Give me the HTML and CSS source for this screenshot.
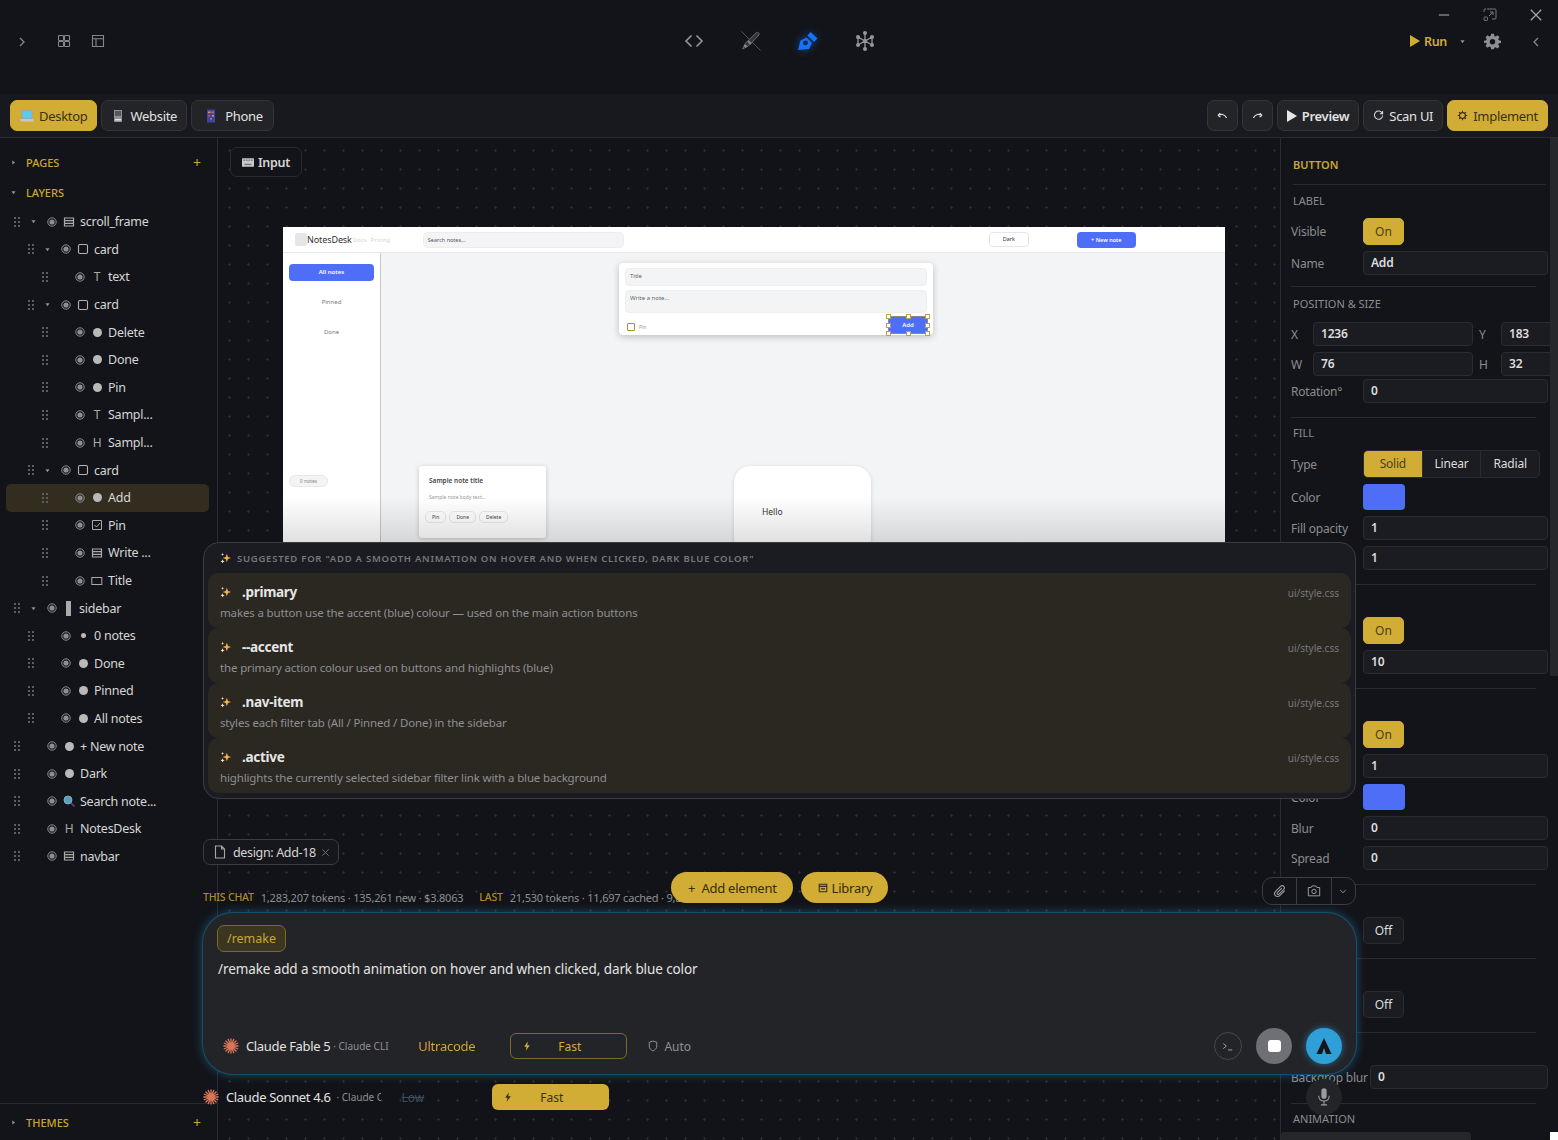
FILE: index.html
```html
<!DOCTYPE html>
<html lang="en">
<head>
  <meta charset="UTF-8">
  <meta name="viewport" content="width=device-width, initial-scale=1.0">
  <title>Design Editor</title>
  <link rel="stylesheet" href="styles.css">
</head>
<body>
  <!-- shared icons -->
  <svg class="sprite" aria-hidden="true">
    <symbol id="grip" viewBox="0 0 6 10"><g fill="#5d5e63"><rect x="0" y="0" width="2" height="2"/><rect x="4" y="0" width="2" height="2"/><rect x="0" y="4" width="2" height="2"/><rect x="4" y="4" width="2" height="2"/><rect x="0" y="8" width="2" height="2"/><rect x="4" y="8" width="2" height="2"/></g></symbol>
    <symbol id="eye" viewBox="0 0 10 10"><circle cx="5" cy="5" r="4.2" fill="none" stroke="#8e8e92" stroke-width="1"/><circle cx="5" cy="5" r="2.6" fill="#8e8e92"/></symbol>
    <symbol id="caret" viewBox="0 0 6 6"><path d="M.5 1.5h5L3 5z" fill="#8e8e92"/></symbol>
    <symbol id="lines" viewBox="0 0 12 12"><path d="M1.5 2h9v8h-9zM1.5 4.7h9M1.5 7.3h9" fill="none" stroke="#aaa" stroke-width="1.2"/></symbol>
    <symbol id="card" viewBox="0 0 12 12"><rect x="1.5" y="1.5" width="9" height="9" rx="1.5" fill="none" stroke="#b5b5b5" stroke-width="1.1"/></symbol>
    <symbol id="sparkle" viewBox="0 0 14 14"><path d="M8 2l1.3 3.7L13 7 9.3 8.300 8 12 6.700 8.300 3 7l3.700-1.300z" fill="#f5b14a"/><path d="M3 8.500l.7 1.800 1.800.7-1.800.7-.7 1.800-.7-1.800L.5 11l1.800-.7z" fill="#fbe7c4"/><path d="M3 1l.5 1.300L4.800 2.800l-1.300.5L3 4.600l-.5-1.300-1.300-.5 1.300-.5z" fill="#fbe7c4"/></symbol>
    <symbol id="burst" viewBox="0 0 18 18"><path d="M9 1v16M1 9h16M3.300 3.300l11.400 11.400M14.700 3.300L3.300 14.700M5.900 1.500l6.200 15M12.100 1.500l-6.200 15M1.500 5.900l15 6.200M16.500 5.900l-15 6.200" stroke="#d9765a" stroke-width="1.500" stroke-linecap="round" fill="none"/></symbol>
    <symbol id="bolt" viewBox="0 0 10 12"><path d="M6.200 0L1.500 6.800h3L3.500 12l5-7H5.300z" fill="currentColor"/></symbol>
  </svg>

  <div class="app">
    <header class="titlebar">
      <div class="title-left">
        <svg class="ico chev" viewBox="0 0 8 12"><path d="M2 2l4 4-4 4" fill="none" stroke="#85868a" stroke-width="1.300"/></svg>
        <svg class="ico" viewBox="0 0 14 14"><g fill="none" stroke="#85868a" stroke-width="1.100"><rect x="1.500" y="1.500" width="5" height="5" rx=".8"/><rect x="7.500" y="1.500" width="5" height="5" rx=".8"/><rect x="1.500" y="7.500" width="5" height="5" rx=".8"/><rect x="7.500" y="7.500" width="5" height="5" rx=".8"/></g></svg>
        <svg class="ico" viewBox="0 0 14 14"><path d="M1.500 1.500h11v11h-11zM1.500 4.800h11M5 4.800v7.700" fill="none" stroke="#85868a" stroke-width="1.100"/></svg>
      </div>
      <div class="title-center">
        <svg class="mode" viewBox="0 0 22 22"><path d="M8.500 5.500L3 11l5.500 5.500M13.500 5.500L19 11l-5.500 5.500" transform="translate(0 0)" fill="none" stroke="#96979b" stroke-width="1.600"/></svg>
        <svg class="mode" viewBox="0 0 22 22"><path d="M1.500 1.500l19 19" stroke="#55565a" stroke-width="1"/><path d="M2.500 19l3-6L16.500 2.500c1.500-.8 3.200.6 2.500 2.500L8.500 16z" fill="#35363a" stroke="#66676b" stroke-width="1"/><circle cx="5.500" cy="16" r="1.300" fill="#96979b"/><path d="M8 11l3 3" stroke="#85868a" stroke-width="2"/></svg>
        <svg class="mode nib" viewBox="0 0 22 22"><path d="M1 20l2.500-9.500 6-3 5.500 5.500-3 6z" fill="#1673f5"/><path d="M10.500 4.500l3-3.500 7 6.500-3.500 3.500z" fill="#1673f5" transform="translate(0 1)"/><circle cx="8.500" cy="13" r="2.400" fill="#0f2a5c"/></svg>
        <svg class="mode" viewBox="0 0 22 22"><g stroke="#96979b" stroke-width="1.300" fill="none"><path d="M11 3v16M4 7l7 4 7-4M4 15l7-4 7 4M4 7v8M18 7v8"/></g><g fill="#96979b"><circle cx="11" cy="3" r="2"/><circle cx="11" cy="19" r="2"/><circle cx="4" cy="7" r="2"/><circle cx="18" cy="7" r="2"/><circle cx="4" cy="15" r="2"/><circle cx="18" cy="15" r="2"/><circle cx="11" cy="11" r="2"/></g></svg>
      </div>
      <div class="title-right">
        <div class="win-controls">
          <svg class="win" viewBox="0 0 12 12"><path d="M1.500 6h9" stroke="#85868a" stroke-width="1.200"/></svg>
          <svg class="win" viewBox="0 0 14 14"><path d="M4 1h8a1 1 0 0 1 1 1v8a1 1 0 0 1-1 1h-3M1 4V2a1 1 0 0 1 1-1h1M6 8l4-4M7 4h3v3" fill="none" stroke="#77787c" stroke-width="1"/><rect x="1" y="9" width="3.500" height="3.500" rx=".7" fill="none" stroke="#77787c"/></svg>
          <svg class="win" viewBox="0 0 12 12"><path d="M1.500 1.500l9 9M10.500 1.500l-9 9" stroke="#a4a5a8" stroke-width="1.100"/></svg>
        </div>
        <div class="run-row">
          <span class="run"><svg class="run-play" viewBox="0 0 10 12"><path d="M0 0l10 6-10 6z" fill="#d1ad36"/></svg>Run</span>
          <svg class="run-caret"><use href="#caret"/></svg>
          <svg class="gear" viewBox="0 0 24 24"><path fill="#8e8f94" fill-rule="evenodd" d="M10 1h4l.6 3.100 1.900.8 2.600-1.800 2.800 2.800-1.800 2.600.8 1.900L24 11v3l-3.100.6-.8 1.900 1.800 2.600-2.800 2.800-2.600-1.800-1.900.8L14 23h-4l-.6-3.100-1.900-.8-2.600 1.800-2.800-2.800 1.800-2.600-.8-1.900L0 14v-3l3.100-.6.800-1.900L2.100 5.900 4.900 3.100l2.600 1.800 1.900-.8zM12 8.500a3.800 3.800 0 1 0 0 7.600 3.800 3.800 0 0 0 0-7.600z"/></svg>
          <svg class="ico chev" viewBox="0 0 8 12"><path d="M6 2L2 6l4 4" fill="none" stroke="#85868a" stroke-width="1.300"/></svg>
        </div>
      </div>
    </header>

    <nav class="toolbar">
      <div class="tool-group">
        <button class="tool-btn gold"><svg class="emoji" viewBox="0 0 14 14"><rect x="2" y="1.500" width="10" height="8" fill="#5fc8ef" stroke="#9aa3ad" stroke-width=".8"/><path d="M.5 10h13v2.500H.5z" fill="#c4c8cc"/></svg>Desktop</button>
        <button class="tool-btn"><svg class="emoji" viewBox="0 0 14 14"><rect x="3" y="1" width="8" height="12" fill="#8d9096"/><rect x="4" y="2" width="6" height="5" fill="#55585e"/><rect x="4" y="10" width="6" height="1.500" fill="#e2e4e6"/></svg>Website</button>
        <button class="tool-btn phone"><svg class="emoji" viewBox="0 0 14 14"><rect x="3" y=".5" width="8" height="13" fill="#4c3f9a"/><g fill="#e8b23c"><rect x="4.200" y="2.500" width="1.600" height="1.600"/><rect x="8.200" y="6" width="1.600" height="1.600"/></g><g fill="#e0524d"><rect x="6.200" y="2.500" width="1.600" height="1.600"/><rect x="4.200" y="6" width="1.600" height="1.600"/></g><g fill="#4aa3df"><rect x="8.200" y="2.500" width="1.600" height="1.600"/><rect x="6.200" y="9" width="1.600" height="1.600"/></g></svg>Phone</button>
      </div>
      <div class="tool-group">
        <button class="tool-btn square"><svg class="hist" viewBox="0 0 12 8"><path d="M1 3.500l2.500-2.500M1 3.500L3.800 5M1.500 3.500c3-2 6.500-1.800 9 2.500" fill="none" stroke="#ddd" stroke-width="1.300"/></svg></button>
        <button class="tool-btn square"><svg class="hist" viewBox="0 0 12 8"><path d="M11 3.500L8.500 1M11 3.500L8.200 5M10.500 3.500c-3-2-6.500-1.800-9 2.500" fill="none" stroke="#ddd" stroke-width="1.300"/></svg></button>
        <button class="tool-btn strong"><svg class="play" viewBox="0 0 10 12"><path d="M0 0l10 6-10 6z" fill="#e6e6e6"/></svg>Preview</button>
        <button class="tool-btn"><svg class="scan" viewBox="0 0 12 12"><path d="M10 3.500A4.500 4.500 0 1 0 10.500 6M10.500 1v3h-3" fill="none" stroke="#ddd" stroke-width="1.100"/></svg>Scan UI</button>
        <button class="tool-btn gold"><svg class="scan" viewBox="0 0 12 12"><circle cx="6" cy="6" r="3.200" fill="none" stroke="#3a3113" stroke-width="1.300"/><path d="M6 .8v2M6 9.200v2M.8 6h2M9.200 6h2M2.300 2.300l1.400 1.400M8.300 8.300l1.400 1.400M9.700 2.300L8.300 3.700M3.700 8.300L2.300 9.700" stroke="#3a3113" stroke-width="1.100"/></svg>Implement</button>
      </div>
    </nav>

    <div class="workspace">
      <aside class="left-panel">
        <div class="panel-head first">
          <span class="head-label"><svg class="mini-caret side"><use href="#caret"/></svg>PAGES</span>
          <span class="plus">+</span>
        </div>
        <div class="panel-head">
          <span class="head-label"><svg class="mini-caret"><use href="#caret"/></svg>LAYERS</span>
        </div>
        <ul class="layers">
          <li class="layer"><svg class="grip"><use href="#grip"/></svg><svg class="caret"><use href="#caret"/></svg><svg class="eye"><use href="#eye"/></svg><svg class="type"><use href="#lines"/></svg><span>scroll_frame</span></li>
          <li class="layer lvl1"><svg class="grip"><use href="#grip"/></svg><svg class="caret"><use href="#caret"/></svg><svg class="eye"><use href="#eye"/></svg><svg class="type"><use href="#card"/></svg><span>card</span></li>
          <li class="layer lvl2"><svg class="grip"><use href="#grip"/></svg><i class="caret"></i><svg class="eye"><use href="#eye"/></svg><b class="type glyph">T</b><span>text</span></li>
          <li class="layer lvl1"><svg class="grip"><use href="#grip"/></svg><svg class="caret"><use href="#caret"/></svg><svg class="eye"><use href="#eye"/></svg><svg class="type"><use href="#card"/></svg><span>card</span></li>
          <li class="layer lvl2"><svg class="grip"><use href="#grip"/></svg><i class="caret"></i><svg class="eye"><use href="#eye"/></svg><i class="type dot"></i><span>Delete</span></li>
          <li class="layer lvl2"><svg class="grip"><use href="#grip"/></svg><i class="caret"></i><svg class="eye"><use href="#eye"/></svg><i class="type dot"></i><span>Done</span></li>
          <li class="layer lvl2"><svg class="grip"><use href="#grip"/></svg><i class="caret"></i><svg class="eye"><use href="#eye"/></svg><i class="type dot"></i><span>Pin</span></li>
          <li class="layer lvl2"><svg class="grip"><use href="#grip"/></svg><i class="caret"></i><svg class="eye"><use href="#eye"/></svg><b class="type glyph">T</b><span>Sampl...</span></li>
          <li class="layer lvl2"><svg class="grip"><use href="#grip"/></svg><i class="caret"></i><svg class="eye"><use href="#eye"/></svg><b class="type glyph">H</b><span>Sampl...</span></li>
          <li class="layer lvl1"><svg class="grip"><use href="#grip"/></svg><svg class="caret"><use href="#caret"/></svg><svg class="eye"><use href="#eye"/></svg><svg class="type"><use href="#card"/></svg><span>card</span></li>
          <li class="layer lvl2 selected"><svg class="grip"><use href="#grip"/></svg><i class="caret"></i><svg class="eye"><use href="#eye"/></svg><i class="type dot"></i><span>Add</span></li>
          <li class="layer lvl2"><svg class="grip"><use href="#grip"/></svg><i class="caret"></i><svg class="eye"><use href="#eye"/></svg><svg class="type" viewBox="0 0 12 12"><path d="M1.500 1.500h9v9h-9z" fill="none" stroke="#aaa"/><path d="M3.500 6l2 2 3.500-4" fill="none" stroke="#aaa"/></svg><span>Pin</span></li>
          <li class="layer lvl2"><svg class="grip"><use href="#grip"/></svg><i class="caret"></i><svg class="eye"><use href="#eye"/></svg><svg class="type"><use href="#lines"/></svg><span>Write ...</span></li>
          <li class="layer lvl2"><svg class="grip"><use href="#grip"/></svg><i class="caret"></i><svg class="eye"><use href="#eye"/></svg><svg class="type" viewBox="0 0 12 12"><rect x=".8" y="2.500" width="10" height="7" fill="none" stroke="#aaa"/></svg><span>Title</span></li>
          <li class="layer"><svg class="grip"><use href="#grip"/></svg><svg class="caret"><use href="#caret"/></svg><svg class="eye"><use href="#eye"/></svg><i class="type bar"></i><span>sidebar</span></li>
          <li class="layer lvl1"><svg class="grip"><use href="#grip"/></svg><i class="caret"></i><svg class="eye"><use href="#eye"/></svg><i class="type dot small"></i><span>0 notes</span></li>
          <li class="layer lvl1"><svg class="grip"><use href="#grip"/></svg><i class="caret"></i><svg class="eye"><use href="#eye"/></svg><i class="type dot"></i><span>Done</span></li>
          <li class="layer lvl1"><svg class="grip"><use href="#grip"/></svg><i class="caret"></i><svg class="eye"><use href="#eye"/></svg><i class="type dot"></i><span>Pinned</span></li>
          <li class="layer lvl1"><svg class="grip"><use href="#grip"/></svg><i class="caret"></i><svg class="eye"><use href="#eye"/></svg><i class="type dot"></i><span>All notes</span></li>
          <li class="layer"><svg class="grip"><use href="#grip"/></svg><i class="caret"></i><svg class="eye"><use href="#eye"/></svg><i class="type dot"></i><span>+ New note</span></li>
          <li class="layer"><svg class="grip"><use href="#grip"/></svg><i class="caret"></i><svg class="eye"><use href="#eye"/></svg><i class="type dot"></i><span>Dark</span></li>
          <li class="layer"><svg class="grip"><use href="#grip"/></svg><i class="caret"></i><svg class="eye"><use href="#eye"/></svg><svg class="type" viewBox="0 0 12 12"><circle cx="5" cy="5" r="4" fill="#4fa3c4" stroke="#9fb4bf" stroke-width=".8"/><path d="M8 8l3.500 3.500" stroke="#6d3a7a" stroke-width="1.600"/></svg><span>Search note...</span></li>
          <li class="layer"><svg class="grip"><use href="#grip"/></svg><i class="caret"></i><svg class="eye"><use href="#eye"/></svg><b class="type glyph">H</b><span>NotesDesk</span></li>
          <li class="layer"><svg class="grip"><use href="#grip"/></svg><i class="caret"></i><svg class="eye"><use href="#eye"/></svg><svg class="type"><use href="#lines"/></svg><span>navbar</span></li>
        </ul>
        <div class="panel-head themes">
          <span class="head-label"><svg class="mini-caret side"><use href="#caret"/></svg>THEMES</span>
          <span class="plus">+</span>
        </div>
      </aside>

      <main class="canvas">
        <div class="input-chip"><svg class="kbd" viewBox="0 0 14 10"><rect width="14" height="10" rx="1" fill="#c8c9cb"/><g fill="#6d6e72"><rect x="1.500" y="1.500" width="2" height="1.500"/><rect x="4.500" y="1.500" width="2" height="1.500"/><rect x="7.500" y="1.500" width="2" height="1.500"/><rect x="10.500" y="1.500" width="2" height="1.500"/><rect x="3" y="6.500" width="8" height="1.500"/></g></svg>Input</div>

        <section class="preview">
          <div class="pv-nav">
            <i class="pv-logo"></i><span class="pv-brand">NotesDesk</span><span class="pv-link">Docs</span><span class="pv-link">Pricing</span>
            <div class="pv-search">Search notes...</div>
            <div class="pv-dark">Dark</div>
            <div class="pv-new">+ New note</div>
          </div>
          <div class="pv-body">
            <div class="pv-side">
              <div class="pv-tab active">All notes</div>
              <div class="pv-tab">Pinned</div>
              <div class="pv-tab">Done</div>
              <div class="pv-count">0 notes</div>
            </div>
            <div class="pv-content">
              <div class="pv-form">
                <div class="pv-input">Title</div>
                <div class="pv-input tall">Write a note...</div>
                <div class="pv-form-foot">
                  <span class="pv-pin"><i></i>Pin</span>
                  <div class="pv-add">Add
                    <i class="handle h1"></i><i class="handle h2"></i><i class="handle h3"></i><i class="handle h4"></i><i class="handle h5"></i><i class="handle h6"></i><i class="handle h7"></i><i class="handle h8"></i>
                  </div>
                </div>
              </div>
              <div class="pv-note">
                <div class="pv-note-title">Sample note title</div>
                <div class="pv-note-body">Sample note body text...</div>
                <div class="pv-note-btns"><span>Pin</span><span>Done</span><span>Delete</span></div>
              </div>
              <div class="pv-hello">Hello</div>
            </div>
          </div>
          <div class="pv-fade"></div>
        </section>
      </main>

      <aside class="props">
        <div class="prop-top">BUTTON</div>
        <section class="prop-sec label-sec">
          <h4>LABEL</h4>
          <div class="prop-row"><label>Visible</label><button class="toggle on">On</button></div>
          <div class="prop-row"><label>Name</label><div class="field">Add</div></div>
        </section>
        <section class="prop-sec pos-sec">
          <h4>POSITION &amp; SIZE</h4>
          <div class="prop-row pair"><label>X</label><div class="field">1236</div><label>Y</label><div class="field">183</div></div>
          <div class="prop-row pair"><label>W</label><div class="field">76</div><label>H</label><div class="field">32</div></div>
          <div class="prop-row tight"><label>Rotation°</label><div class="field">0</div></div>
        </section>
        <section class="prop-sec">
          <h4>FILL</h4>
          <div class="prop-row"><label>Type</label>
            <div class="segments"><span class="seg on">Solid</span><span class="seg">Linear</span><span class="seg">Radial</span></div>
          </div>
          <div class="prop-row"><label>Color</label><i class="swatch"></i></div>
          <div class="prop-row"><label>Fill opacity</label><div class="field">1</div></div>
          <div class="prop-row"><label>Opacity</label><div class="field">1</div></div>
        </section>
        <section class="prop-sec">
          <h4>CORNERS</h4>
          <div class="prop-row"><label>Rounded</label><button class="toggle on">On</button></div>
          <div class="prop-row"><label>Radius</label><div class="field">10</div></div>
        </section>
        <section class="prop-sec">
          <h4>BORDER</h4>
          <div class="prop-row"><label>Enabled</label><button class="toggle on">On</button></div>
          <div class="prop-row"><label>Width</label><div class="field">1</div></div>
          <div class="prop-row"><label>Color</label><i class="swatch"></i></div>
          <div class="prop-row"><label>Blur</label><div class="field">0</div></div>
          <div class="prop-row"><label>Spread</label><div class="field">0</div></div>
        </section>
        <section class="prop-sec">
          <h4>SHADOW</h4>
          <div class="prop-row"><label>Enabled</label><button class="toggle">Off</button></div>
        </section>
        <section class="prop-sec">
          <h4>GLOW</h4>
          <div class="prop-row"><label>Enabled</label><button class="toggle">Off</button></div>
        </section>
        <section class="prop-sec">
          <h4>EFFECTS</h4>
          <div class="prop-row wide"><label>Backdrop blur</label><div class="field">0</div></div>
        </section>
        <section class="prop-sec">
          <h4>ANIMATION</h4>
        </section>
        <i class="v-thumb"></i>
        <i class="h-thumb"></i>
        <i class="corner"></i>
      </aside>

      <!-- chat dock floats over the panels -->
      <div class="dock">
        <div class="suggest">
          <div class="suggest-head"><svg class="spark"><use href="#sparkle"/></svg>SUGGESTED FOR "ADD A SMOOTH ANIMATION ON HOVER AND WHEN CLICKED, DARK BLUE COLOR"</div>
          <div class="suggest-item">
            <div class="s-main"><div class="s-name"><svg class="spark"><use href="#sparkle"/></svg>.primary</div><div class="s-desc">makes a button use the accent (blue) colour — used on the main action buttons</div></div>
            <span class="s-file">ui/style.css</span>
          </div>
          <div class="suggest-item">
            <div class="s-main"><div class="s-name"><svg class="spark"><use href="#sparkle"/></svg>--accent</div><div class="s-desc">the primary action colour used on buttons and highlights (blue)</div></div>
            <span class="s-file">ui/style.css</span>
          </div>
          <div class="suggest-item">
            <div class="s-main"><div class="s-name"><svg class="spark"><use href="#sparkle"/></svg>.nav-item</div><div class="s-desc">styles each filter tab (All / Pinned / Done) in the sidebar</div></div>
            <span class="s-file">ui/style.css</span>
          </div>
          <div class="suggest-item">
            <div class="s-main"><div class="s-name"><svg class="spark"><use href="#sparkle"/></svg>.active</div><div class="s-desc">highlights the currently selected sidebar filter link with a blue background</div></div>
            <span class="s-file">ui/style.css</span>
          </div>
        </div>

        <div class="file-chip"><svg class="doc" viewBox="0 0 12 14"><path d="M1.500 1h6l3 3v9h-9zM7.500 1v3h3" fill="none" stroke="#a5a6aa" stroke-width="1.100"/></svg>design: Add-18<svg class="close" viewBox="0 0 10 10"><path d="M1.500 1.500l7 7M8.500 1.500l-7 7" stroke="#77787c"/></svg></div>

        <div class="stats">
          <b>THIS CHAT</b><span>1,283,207 tokens · 135,261 new · $3.8063</span><b class="last">LAST</b><span>21,530 tokens · 11,697 cached · 9,833 new · $0.0514</span>
        </div>

        <div class="composer">
          <span class="cmd-tag">/remake</span>
          <p class="prompt">/remake add a smooth animation on hover and when clicked, dark blue color</p>
          <div class="composer-foot">
            <svg class="burst"><use href="#burst"/></svg>
            <span class="model">Claude Fable 5</span><span class="model-sub">· Claude CLI</span>
            <span class="ultra">Ultracode</span>
            <div class="fast outline"><svg class="bolt"><use href="#bolt"/></svg><span>Fast</span></div>
            <svg class="shield" viewBox="0 0 12 14"><path d="M6 1l4.500 1.500V7c0 3-2 4.800-4.500 6C3.500 11.800 1.500 10 1.500 7V2.500z" fill="none" stroke="#8e8f94" stroke-width="1.200"/></svg>
            <span class="auto">Auto</span>
            <div class="foot-actions">
              <span class="term"><svg viewBox="0 0 14 10"><path d="M1.500 1.500L5 4.500 1.500 7.500M7 9h5" fill="none" stroke="#a5a6aa" stroke-width="1.100"/></svg></span>
              <span class="stop"><i></i></span>
              <span class="send"><svg viewBox="0 0 18 18"><path d="M9 1l7.500 16H11L9 11l-2 6H1.500z" fill="#14161a"/></svg></span>
            </div>
          </div>
        </div>

        <div class="model-row">
          <svg class="burst"><use href="#burst"/></svg>
          <span class="model">Claude Sonnet 4.6</span><span class="model-sub clip">· Claude CLI</span>
          <span class="low">Low</span>
          <div class="fast solid"><svg class="bolt"><use href="#bolt"/></svg><span>Fast</span></div>
          <span class="mic"><svg viewBox="0 0 16 22"><rect x="5" y="1" width="6" height="12" rx="3" fill="#9b9ca0"/><path d="M2 9.500c0 4 2.500 6 6 6s6-2 6-6M8 15.500V20M4.500 20h7" fill="none" stroke="#9b9ca0" stroke-width="1.200"/></svg></span>
        </div>

        <div class="float-actions">
          <button class="pill">+&nbsp; Add element</button>
          <button class="pill"><svg class="lib" viewBox="0 0 12 12"><path d="M1.500 1.500h9v9h-9zM1.500 4h9M3.500 7h5" fill="none" stroke="#332b10" stroke-width="1.300"/></svg>Library</button>
        </div>

        <div class="attach">
          <span><svg viewBox="0 0 16 16"><path d="M13.500 7.500L8 13c-1.700 1.700-4 1.700-5.300.3S1.500 9.800 3 8.300l5.700-5.700c1-1 2.700-1 3.600 0s1 2.500 0 3.500L6.800 11.600c-.5.500-1.300.5-1.800 0s-.5-1.300 0-1.800l5-5" fill="none" stroke="#9b9ca0" stroke-width="1.200"/></svg></span>
          <span><svg viewBox="0 0 16 14"><path d="M1.500 3h3.300l1-1.800h4.400l1 1.800h3.300v9.500h-13z" fill="none" stroke="#9b9ca0" stroke-width="1.100"/><circle cx="8" cy="7.500" r="2.500" fill="none" stroke="#9b9ca0" stroke-width="1.100"/></svg></span>
          <span class="more"><svg viewBox="0 0 10 6"><path d="M1.500 1.200L5 4.500l3.500-3.300" fill="none" stroke="#9b9ca0" stroke-width="1.100"/></svg></span>
        </div>
      </div>
    </div>
  </div>
</body>
</html>
```

FILE: styles.css
```css
* {
  margin: 0;
  padding: 0;
  box-sizing: border-box;
}

html, body {
  height: 100%;
  overflow: hidden;
}

body {
  font-family: "Noto Sans", "Open Sans", sans-serif;
  background-color: #131419;
  color: #d8d8d8;
  font-size: 13px;
}

ul {
  list-style: none;
}

button {
  font-family: inherit;
  border: none;
}

.sprite {
  display: none;
}

.app {
  width: 1558px;
  height: 1140px;
  display: flex;
  flex-direction: column;
}

/* title bar */
.titlebar {
  height: 94px;
  flex-shrink: 0;
  display: grid;
  grid-template-columns: 1fr auto 1fr;
  background-color: #131419;
}

.ico {
  width: 14px;
  height: 14px;
}

.ico.chev {
  width: 8px;
  height: 12px;
  margin-top: 2px;
}

.title-left {
  display: flex;
  align-items: center;
  height: 82px;
  padding-left: 18px;
  gap: 20px;
}

.title-left .ico.chev {
  margin-right: 11px;
}

.title-center {
  display: flex;
  align-items: center;
  height: 82px;
  gap: 35px;
}

.mode {
  width: 22px;
  height: 22px;
}

.mode.nib {
  filter: drop-shadow(0 0 4px rgba(22, 115, 245, 0.55));
}

.title-right {
  display: flex;
  flex-direction: column;
  align-items: flex-end;
}

.win-controls {
  display: flex;
  align-items: center;
  height: 30px;
  gap: 32px;
  padding-right: 15px;
}

.win {
  width: 14px;
  height: 14px;
}

.run-row {
  display: flex;
  align-items: center;
  height: 22px;
  padding-right: 18px;
  margin-top: 0;
}

.run {
  display: flex;
  align-items: center;
  color: #d1ad36;
  font-weight: 600;
  font-size: 12.5px;
  letter-spacing: -0.3px;
  gap: 4px;
}

.run-play {
  width: 10px;
  height: 12px;
}

.run-caret {
  width: 5px;
  height: 5px;
  margin: 0 19px 0 13px;
}

.gear {
  width: 17px;
  height: 17px;
  margin-right: 31px;
}

/* toolbar */
.toolbar {
  height: 44px;
  flex-shrink: 0;
  display: flex;
  justify-content: space-between;
  align-items: flex-start;
  padding: 6px 10px 0;
  background-color: #18191e;
  border-bottom: 1px solid #2a2b30;
}

.tool-group {
  display: flex;
  gap: 4px;
}

.tool-btn {
  height: 31px;
  display: flex;
  align-items: center;
  gap: 5px;
  padding: 0 9px;
  background-color: #232428;
  border: 1px solid #333438;
  border-radius: 7px;
  color: #e2e2e2;
  font-size: 13px;
  letter-spacing: -0.3px;
}

.tool-btn.gold {
  background-color: #d1ad36;
  border-color: #d1ad36;
  color: #3a3113;
}

.tool-btn.phone {
  padding: 0 10px 0 12px;
  gap: 7px;
}

.tool-btn.square {
  width: 31px;
  justify-content: center;
  padding: 0;
}

.tool-btn.strong {
  font-weight: 600;
}

.emoji {
  width: 14px;
  height: 14px;
}

.hist {
  width: 11px;
  height: 8px;
}

.play {
  width: 10px;
  height: 12px;
}

.scan {
  width: 11px;
  height: 11px;
}

/* workspace */
.workspace {
  position: relative;
  flex: 1;
  display: flex;
  min-height: 0;
}

.left-panel {
  width: 218px;
  flex-shrink: 0;
  display: flex;
  flex-direction: column;
  background-color: #131419;
  border-right: 1px solid #2a2b30;
}

.panel-head {
  display: flex;
  justify-content: space-between;
  align-items: center;
  height: 30px;
  padding: 0 16px 0 11px;
}

.panel-head.first {
  margin-top: 9px;
}

.head-label {
  display: flex;
  align-items: center;
  gap: 10px;
  color: #c9a635;
  font-size: 11px;
  font-weight: 500;
}

.mini-caret {
  width: 5px;
  height: 5px;
}

.mini-caret.side {
  transform: rotate(-90deg);
}

.plus {
  color: #c9a635;
  font-size: 14px;
}

.layers {
  margin: 0 8px 0 6px;
  padding-top: 1px;
}

.layer {
  height: 27.6px;
  display: flex;
  align-items: center;
  padding-left: 8px;
  font-size: 12.5px;
  letter-spacing: -0.25px;
  color: #d6d6d6;
}

.layer.lvl1 {
  padding-left: 22px;
}

.layer.lvl2 {
  padding-left: 36px;
}

.layer.selected {
  background-color: #332d20;
  border-radius: 5px;
}

.grip {
  width: 6px;
  height: 10px;
  margin-right: 1px;
}

.caret {
  display: block;
  width: 5px;
  height: 5px;
  margin: 0 10px;
}

.eye {
  width: 10px;
  height: 10px;
  margin-left: 1px;
}

.type {
  display: block;
  width: 12px;
  height: 12px;
  margin: 0 5px 0 6px;
  flex-shrink: 0;
}

.type.glyph {
  color: #aaa;
  font-weight: 400;
  font-size: 12px;
  line-height: 12px;
  text-align: center;
}

.type.dot {
  width: 9px;
  height: 9px;
  margin: 0 6px 0 8px;
  border-radius: 50%;
  background-color: #b9b9b9;
}

.type.dot.small {
  width: 5px;
  height: 5px;
  margin: 0 8px 0 10px;
}

.type.bar {
  width: 5px;
  height: 15px;
  margin: 0 8px 0 9px;
  background-color: #aaa;
}

.panel-head.themes {
  margin-top: auto;
  height: 37px;
  border-top: 1px solid #2a2b30;
}

/* canvas */
.canvas {
  position: relative;
  flex: 1;
  min-width: 0;
  background-color: #121318;
  background-image: radial-gradient(circle, #2a2b30 1px, transparent 1.2px);
  background-size: 19px 19px;
  background-position: 2px 3px;
}

.input-chip {
  position: absolute;
  left: 12px;
  top: 9px;
  height: 30px;
  display: flex;
  align-items: center;
  gap: 4px;
  padding: 0 11px;
  background-color: #131419;
  border: 1px solid #2a2b30;
  border-radius: 7px;
  font-size: 12.5px;
  font-weight: 600;
  letter-spacing: -0.3px;
  color: #d5d5d5;
}

.kbd {
  width: 12px;
  height: 9px;
}

/* preview of the design, a free canvas element */
.preview {
  position: absolute;
  left: 65px;
  top: 89px;
  width: 942px;
  height: 315px;
  display: flex;
  flex-direction: column;
  overflow: hidden;
  background-color: #fff;
  color: #333;
}

.pv-nav {
  height: 26px;
  flex-shrink: 0;
  display: flex;
  align-items: center;
  padding-left: 12px;
  border-bottom: 1px solid #e8e8ea;
}

.pv-logo {
  width: 12px;
  height: 13px;
  background-color: #e6e6e8;
  border-radius: 2px;
}

.pv-brand {
  font-size: 9px;
  color: #333;
  letter-spacing: -0.1px;
}

.pv-link {
  font-size: 6px;
  color: #d5d5d8;
  margin-left: 1px;
  width: 17px;
}

.pv-link + .pv-link {
  width: 24px;
  margin-left: 1px;
}

.pv-search {
  width: 201px;
  height: 16px;
  margin-left: 28px;
  padding: 3px 4px;
  background-color: #f3f4f6;
  border: 1px solid #eceded;
  border-radius: 5px;
  font-size: 5.500px;
  color: #555;
}

.pv-dark {
  width: 40px;
  height: 15px;
  margin-left: 365px;
  text-align: center;
  font-size: 5.500px;
  line-height: 13px;
  border: 1px solid #e6e6e8;
  border-radius: 4px;
}

.pv-new {
  width: 59px;
  height: 16px;
  margin-left: 48px;
  text-align: center;
  font-size: 5.500px;
  font-weight: 600;
  line-height: 16px;
  color: #fff;
  background-color: #4f6ef7;
  border-radius: 4px;
}

.pv-body {
  flex: 1;
  display: flex;
  min-height: 0;
}

.pv-side {
  position: relative;
  width: 98px;
  flex-shrink: 0;
  padding: 11px 6px 0;
  border-right: 1px solid #c6c7ca;
}

.pv-tab {
  height: 17px;
  margin-bottom: 13px;
  text-align: center;
  font-size: 6px;
  line-height: 17px;
  color: #777;
}

.pv-tab.active {
  margin-bottom: 13px;
  color: #fff;
  font-weight: 600;
  background-color: #4f6ef7;
  border-radius: 4px;
}

.pv-count {
  position: absolute;
  left: 6px;
  top: 222px;
  width: 39px;
  height: 12px;
  text-align: center;
  font-size: 5px;
  line-height: 11px;
  color: #888;
  background-color: #f3f4f6;
  border: 1px solid #e8e8ea;
  border-radius: 6px;
}

.pv-content {
  position: relative;
  flex: 1;
  background-color: #f3f4f6;
}

.pv-form {
  position: absolute;
  left: 238px;
  top: 10px;
  width: 314px;
  height: 72px;
  padding: 5px 6px;
  background-color: #fff;
  border-radius: 4px;
  box-shadow: 0 2px 7px rgba(0, 0, 0, 0.22);
}

.pv-input {
  height: 18px;
  margin-bottom: 4px;
  padding: 3px 4px;
  font-size: 6px;
  color: #666;
  background-color: #f3f4f6;
  border: 1px solid #eeeeef;
  border-radius: 4px;
}

.pv-input.tall {
  height: 23px;
}

.pv-form-foot {
  display: flex;
  justify-content: space-between;
  align-items: center;
  padding-left: 2px;
}

.pv-pin {
  display: flex;
  align-items: center;
  gap: 4px;
  font-size: 5px;
  color: #999;
  margin-top: 4px;
}

.pv-pin i {
  width: 8px;
  height: 8px;
  border: 1px solid #a89230;
  border-radius: 1px;
}

.pv-add {
  position: relative;
  width: 38px;
  height: 16px;
  text-align: center;
  font-size: 6px;
  font-weight: 600;
  line-height: 16px;
  color: #fff;
  background-color: #4f6ef7;
  outline: 1px solid #888;
}

.handle {
  position: absolute;
  width: 5px;
  height: 5px;
  background-color: #fff;
  border: 1px solid #b8a24a;
}

.h1 { left: -3px; top: -3px; }
.h2 { left: 17px; top: -3px; }
.h3 { right: -3px; top: -3px; }
.h4 { left: -3px; top: 6px; }
.h5 { right: -3px; top: 6px; }
.h6 { left: -3px; bottom: -3px; }
.h7 { left: 17px; bottom: -3px; }
.h8 { right: -3px; bottom: -3px; }

.pv-note {
  position: absolute;
  left: 38px;
  top: 213px;
  width: 127px;
  height: 72px;
  padding: 10px 8px;
  background-color: #fff;
  border-radius: 3px;
  box-shadow: 0 1px 5px rgba(0, 0, 0, 0.2);
}

.pv-note-title {
  margin-left: 2px;
  font-size: 6.500px;
  font-weight: 600;
  color: #444;
}

.pv-note-body {
  margin: 9px 0 11px 2px;
  font-size: 5px;
  color: #999;
}

.pv-note-btns {
  display: flex;
  gap: 3px;
  margin-left: -2px;
}

.pv-note-btns span {
  padding: 2px 6px;
  font-size: 5px;
  color: #444;
  border: 1px solid #e8e8ea;
  border-radius: 5px;
}

.pv-hello {
  position: absolute;
  left: 353px;
  top: 213px;
  width: 137px;
  height: 88px;
  padding: 40px 0 0 28px;
  font-size: 8.500px;
  color: #333;
  background-color: #fff;
  border-radius: 16px;
  box-shadow: 0 1px 4px rgba(0, 0, 0, 0.15);
}

.pv-fade {
  position: absolute;
  left: 0;
  right: 0;
  bottom: 0;
  height: 45px;
  background: linear-gradient(to bottom, rgba(0, 0, 0, 0), rgba(0, 0, 0, 0.12));
}

/* properties panel */
.props {
  position: relative;
  width: 278px;
  flex-shrink: 0;
  padding: 0 10px;
  overflow: hidden;
  background-color: #131419;
  border-left: 1px solid #2a2b30;
}

.prop-top {
  margin: 0 2px;
  height: 47px;
  padding-top: 19px;
  font-size: 11px;
  font-weight: 600;
  color: #c9a635;
  border-bottom: 1px solid #2a2b30;
}

.prop-sec {
  display: flex;
  flex-direction: column;
  gap: 6px;
  margin: 0 -2px;
  padding: 8px 2px 15px;
  background: linear-gradient(#2a2b30, #2a2b30) no-repeat 2px 100% / 245px 1px;
}

.prop-sec h4 {
  height: 14px;
  margin: 0 0 4px 2px;
  font-size: 11px;
  font-weight: 400;
  line-height: 14px;
  color: #8b8c90;
}

.label-sec {
  padding-top: 9px;
  padding-bottom: 12px;
}

.pos-sec {
  padding-top: 10px;
}

.pos-sec h4 {
  margin-bottom: 5px;
}

.prop-row {
  display: flex;
  align-items: center;
  font-size: 12px;
  letter-spacing: -0.2px;
  color: #8b8c90;
}

.prop-row label {
  width: 72px;
  flex-shrink: 0;
}

.prop-row.pair {
  width: 340px;
}

.prop-row.pair label {
  width: 22px;
}

.prop-row.pair .field {
  flex: none;
  width: 160px;
}

.prop-row.pair .field:nth-of-type(1) {
  margin-right: 6px;
}

.prop-row.tight {
  margin-top: -3px;
}

.prop-row.wide label {
  width: 79px;
}

.field {
  flex: 1;
  width: 177px;
  height: 24px;
  padding-left: 7px;
  line-height: 22px;
  font-size: 12px;
  font-weight: 600;
  color: #ddd;
  background-color: #1b1c21;
  border: 1px solid #2b2c31;
  border-radius: 4px;
}

.toggle {
  width: 41px;
  height: 27px;
  font-size: 12px;
  color: #ddd;
  background-color: #1b1c21;
  border: 1px solid #2b2c31;
  border-radius: 5px;
}

.toggle.on {
  color: #4b4016;
  background-color: #d1ad36;
  border-color: #d1ad36;
}

.segments {
  display: flex;
  width: 177px;
  height: 28px;
  background-color: #1b1c21;
  border: 1px solid #2b2c31;
  border-radius: 5px;
  overflow: hidden;
}

.seg {
  flex: 1;
  text-align: center;
  line-height: 26px;
  color: #ddd;
  border-left: 1px solid #2b2c31;
}

.seg.on {
  color: #4b4016;
  background-color: #d1ad36;
  border-left: none;
}

.swatch {
  display: block;
  width: 42px;
  height: 26px;
  background-color: #4f6ef7;
  border-radius: 4px;
}

.v-thumb {
  position: absolute;
  right: 0;
  top: 0;
  width: 8px;
  height: 538px;
  background-color: #26272b;
}

.h-thumb {
  position: absolute;
  left: 0;
  bottom: 0;
  width: 190px;
  height: 8px;
  background-color: #26272b;
  border-radius: 4px 4px 0 0;
}

.corner {
  position: absolute;
  right: 0;
  bottom: 0;
  width: 8px;
  height: 8px;
  background-color: #fff;
}

/* chat dock */
.dock {
  position: absolute;
  left: 203px;
  top: 404px;
  width: 1153px;
  display: flex;
  flex-direction: column;
}

.suggest {
  height: 257px;
  padding: 0 4px;
  background-color: #1b1c22;
  border: 1px solid #3b3c41;
  border-radius: 16px;
}

.suggest-head {
  height: 30px;
  display: flex;
  align-items: center;
  padding-left: 12px;
  font-size: 9.500px;
  font-weight: 600;
  letter-spacing: 0.75px;
  color: #77787d;
}

.spark {
  width: 12px;
  height: 12px;
  margin-right: 5px;
  flex-shrink: 0;
}

.suggest-item {
  height: 55px;
  display: flex;
  justify-content: space-between;
  padding: 9px 12px 0;
  background-color: #2b2822;
  border-radius: 10px;
}

.s-name {
  display: flex;
  align-items: center;
  height: 20px;
  font-size: 13.500px;
  font-weight: 700;
  letter-spacing: -0.3px;
  color: #e6e6e6;
}

.s-name .spark {
  margin-right: 10px;
}

.s-desc {
  margin-top: 3px;
  font-size: 11.500px;
  letter-spacing: -0.15px;
  color: #8f8f92;
}

.s-file {
  padding-top: 4px;
  font-size: 10px;
  color: #77787d;
}

.file-chip {
  align-self: flex-start;
  display: flex;
  align-items: center;
  height: 26px;
  margin-top: 40px;
  padding: 0 8px 0 10px;
  background-color: #16171c;
  border: 1px solid #3b3c41;
  border-radius: 7px;
  font-size: 12.500px;
  letter-spacing: -0.35px;
  color: #d5d5d5;
}

.doc {
  width: 12px;
  height: 14px;
  margin-right: 7px;
}

.close {
  width: 9px;
  height: 9px;
  margin-left: 5px;
}

.stats {
  display: flex;
  align-items: center;
  gap: 7px;
  width: 477px;
  height: 16px;
  margin-top: 24px;
  overflow: hidden;
  white-space: nowrap;
  font-size: 11px;
  letter-spacing: -0.2px;
  color: #8f8f92;
}

.stats b {
  color: #a98c2e;
  font-weight: 500;
  font-size: 10.500px;
}

.stats .last {
  margin-left: 9px;
}

.composer {
  height: 161px;
  margin-top: 8px;
  padding: 12px 14px 0;
  display: flex;
  flex-direction: column;
  background-color: #232427;
  border-radius: 30px;
  box-shadow: 0 0 0 1px #14506e, 0 0 9px 2px rgba(40, 150, 210, 0.35);
}

.cmd-tag {
  align-self: flex-start;
  height: 27px;
  padding: 0 9px;
  line-height: 25px;
  font-size: 12.500px;
  color: #c9a635;
  background-color: #3c3620;
  border: 1px solid #7e6a24;
  border-radius: 7px;
}

.prompt {
  margin: 8px 0 0 1px;
  font-size: 13.500px;
  letter-spacing: -0.1px;
  color: #e3e3e3;
}

.composer-foot {
  display: flex;
  align-items: center;
  height: 36px;
  margin-top: auto;
  margin-bottom: 10px;
}

.burst {
  width: 16px;
  height: 16px;
  margin-right: 7px;
  flex-shrink: 0;
}

.composer-foot .burst {
  margin-left: 6px;
}

.model {
  font-size: 13px;
  letter-spacing: -0.35px;
  color: #e3e3e3;
}

.model-sub {
  margin-left: 3px;
  width: 56px;
  overflow: hidden;
  white-space: nowrap;
  font-size: 10px;
  color: #8f8f92;
}

.model-sub.clip {
  width: 44px;
  margin-left: 6px;
}

.ultra {
  margin-left: 29px;
  font-size: 13px;
  letter-spacing: -0.25px;
  background: linear-gradient(to right, #e8a040, #d1ad36);
  -webkit-background-clip: text;
  background-clip: text;
  color: transparent;
}

.fast {
  display: flex;
  align-items: center;
  width: 117px;
  height: 26px;
  font-size: 12px;
  border-radius: 6px;
}

.fast span {
  flex: 1;
  text-align: center;
  padding-right: 18px;
}

.fast .bolt {
  width: 8px;
  height: 10px;
  margin-left: 12px;
}

.fast.outline {
  margin-left: 35px;
  color: #d1ad36;
  border: 1px solid #7e6a24;
}

.fast.solid {
  margin-left: 68px;
  color: #3a3113;
  background-color: #d1ad36;
}

.shield {
  width: 10px;
  height: 12px;
  margin-left: 21px;
}

.auto {
  margin-left: 6px;
  font-size: 12px;
  color: #8f8f92;
}

.foot-actions {
  display: flex;
  align-items: center;
  margin-left: auto;
}

.term {
  display: flex;
  align-items: center;
  justify-content: center;
  width: 28px;
  height: 28px;
  margin-right: 14px;
  border: 1px solid #47484c;
  border-radius: 50%;
}

.term svg {
  width: 12px;
  height: 9px;
}

.stop {
  display: flex;
  align-items: center;
  justify-content: center;
  width: 36px;
  height: 36px;
  margin-right: 14px;
  background-color: #6f7075;
  border-radius: 50%;
}

.stop i {
  width: 13px;
  height: 12px;
  background-color: #fff;
  border-radius: 3px;
}

.send {
  display: flex;
  align-items: center;
  justify-content: center;
  width: 36px;
  height: 36px;
  background-color: #2f9fd8;
  border-radius: 50%;
  box-shadow: 0 0 7px rgba(47, 159, 216, 0.6);
}

.send svg {
  width: 18px;
  height: 18px;
}

.model-row {
  display: flex;
  align-items: center;
  height: 26px;
  margin-top: 10px;
}

.low {
  margin-left: 21px;
  font-size: 12px;
  color: #3d4c60;
  text-decoration: line-through;
}

.mic {
  display: flex;
  align-items: center;
  justify-content: center;
  width: 36px;
  height: 36px;
  margin-left: auto;
  margin-right: 14px;
  background-color: #232427;
  border-radius: 50%;
}

.mic svg {
  width: 14px;
  height: 20px;
}

.float-actions {
  position: absolute;
  left: 468px;
  top: 330px;
  display: flex;
  gap: 8px;
}

.pill {
  display: flex;
  align-items: center;
  height: 31px;
  padding: 0 16px 0 17px;
  gap: 4px;
  font-size: 13px;
  letter-spacing: -0.25px;
  color: #332b10;
  background-color: #d1ad36;
  border-radius: 16px;
}

.lib {
  width: 10px;
  height: 10px;
}

.attach {
  position: absolute;
  left: 1059px;
  top: 335px;
  display: flex;
  width: 94px;
  height: 28px;
  background-color: #131419;
  border: 1px solid #3b3c41;
  border-radius: 10px;
}

.attach span {
  display: flex;
  align-items: center;
  justify-content: center;
  width: 35px;
  border-right: 1px solid #3b3c41;
}

.attach span.more {
  width: 24px;
  border-right: none;
}

.attach svg {
  width: 14px;
  height: 14px;
}

.attach .more svg {
  width: 8px;
  height: 5px;
}
```
